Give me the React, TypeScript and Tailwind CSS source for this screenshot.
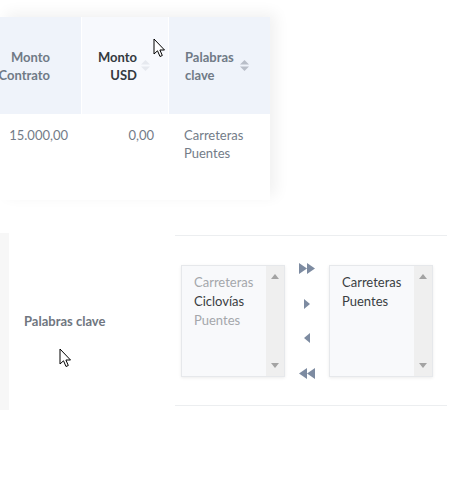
const Cursor = ({ className }: { className: string }) => (
  <svg className={className} width="13" height="20" viewBox="0 0 13 20">
    <path
      d="M1 1 L1 16 L4.5 12.8 L7 18.5 L9.3 17.5 L6.9 12 L11.5 12 Z"
      fill="#fff"
      stroke="#000"
      strokeWidth="1"
      strokeLinejoin="round"
    />
  </svg>
);

const SortIcon = ({ color }: { color: string }) => (
  <svg width="9" height="11" viewBox="0 0 9 11" className="shrink-0">
    <path d="M4.5 0 L9 4.5 L0 4.5 Z" fill={color} />
    <path d="M0 6.5 L9 6.5 L4.5 11 Z" fill={color} />
  </svg>
);

const Scrollbar = () => (
  <div className="w-[18px] bg-[#efefef] flex flex-col items-center justify-between py-[8px]">
    <svg width="8" height="5" viewBox="0 0 8 5">
      <path d="M4 0 L8 5 L0 5 Z" fill="#a3a3a3" />
    </svg>
    <svg width="8" height="5" viewBox="0 0 8 5">
      <path d="M0 0 L8 0 L4 5 Z" fill="#a3a3a3" />
    </svg>
  </div>
);

const ListBox = ({ items }: { items: { label: string; active: boolean }[] }) => (
  <div className="flex w-[104px] h-[112px] bg-[#f8f9fb] border border-[#e6e8eb] shadow-[0_1px_3px_rgba(0,0,0,0.08)]">
    <div className="flex-1 pl-[12px] pt-[7px] text-[13px] leading-[19px]">
      {items.map((it) => (
        <div key={it.label} className={it.active ? "text-[#3a3e42]" : "text-[#a4a7ab]"}>
          {it.label}
        </div>
      ))}
    </div>
    <Scrollbar />
  </div>
);

export default function App() {
  return (
    <div
      className="relative w-[473px] h-[494px] bg-white overflow-hidden"
      style={{ fontFamily: "Lato, 'Noto Sans', sans-serif" }}
    >
      {/* table card */}
      <div className="pt-[17px]">
        <div className="w-[270px] bg-white shadow-[6px_-4px_14px_rgba(0,0,0,0.06)]">
          <div className="grid grid-cols-[82px_87px_101px] h-[97px] text-[13px] leading-[18px] font-bold">
            <div className="bg-[#eff3fa] border-r border-white flex items-center justify-end pr-[31px] text-right text-[#707a86]">
              <span className="whitespace-nowrap">
                Monto
                <br />
                Contrato
              </span>
            </div>
            <div className="bg-[#f7f9fd] border-r border-white flex items-center justify-end gap-[4px] pr-[18px] text-right text-[#343a40]">
              <span>
                Monto
                <br />
                USD
              </span>
              <SortIcon color="#e6e9ef" />
            </div>
            <div className="bg-[#eff3fa] flex items-center gap-[6px] pl-[16px] text-[#707a86]">
              <span>
                Palabras
                <br />
                clave
              </span>
              <SortIcon color="#b9bec8" />
            </div>
          </div>
          <div className="grid grid-cols-[82px_87px_101px] h-[86px] text-[13px] leading-[18px] text-[#737c88] pt-[12px]">
            <div className="text-right pr-[14px]">15.000,00</div>
            <div className="text-right pr-[15px]">0,00</div>
            <div className="pl-[15px]">
              Carreteras
              <br />
              Puentes
            </div>
          </div>
        </div>
      </div>

      {/* dual list row */}
      <div className="mt-[33px] flex">
        <div className="w-[9px] h-[177px] bg-[#f7f7f7]" />
        <div className="w-[166px] flex items-center pl-[15px] text-[13px] font-bold text-[#6f7680]">
          Palabras clave
        </div>
        <div className="w-[272px] mt-[2px] h-[171px] border-y border-[#eceef0] flex items-center pl-[6px]">
          <ListBox
            items={[
              { label: "Carreteras", active: false },
              { label: "Ciclovías", active: true },
              { label: "Puentes", active: false },
            ]}
          />
          <div className="w-[44px] h-[116px] mt-[1px] flex flex-col items-center justify-between">
            <svg width="17" height="11" viewBox="0 0 17 11">
              <path d="M0 0 L8 5.5 L0 11 Z M8 0 L16 5.5 L8 11 Z" fill="#7d8ba1" />
            </svg>
            <svg width="6" height="10" viewBox="0 0 6 10">
              <path d="M0 0 L6 5 L0 10 Z" fill="#7d8ba1" />
            </svg>
            <svg width="6" height="10" viewBox="0 0 6 10">
              <path d="M6 0 L0 5 L6 10 Z" fill="#7d8ba1" />
            </svg>
            <svg width="17" height="11" viewBox="0 0 17 11">
              <path d="M8 0 L0 5.5 L8 11 Z M16 0 L8 5.5 L16 11 Z" fill="#7d8ba1" />
            </svg>
          </div>
          <ListBox
            items={[
              { label: "Carreteras", active: true },
              { label: "Puentes", active: true },
            ]}
          />
        </div>
      </div>

      <Cursor className="absolute left-[153px] top-[38px]" />
      <Cursor className="absolute left-[59px] top-[348px]" />
    </div>
  );
}
